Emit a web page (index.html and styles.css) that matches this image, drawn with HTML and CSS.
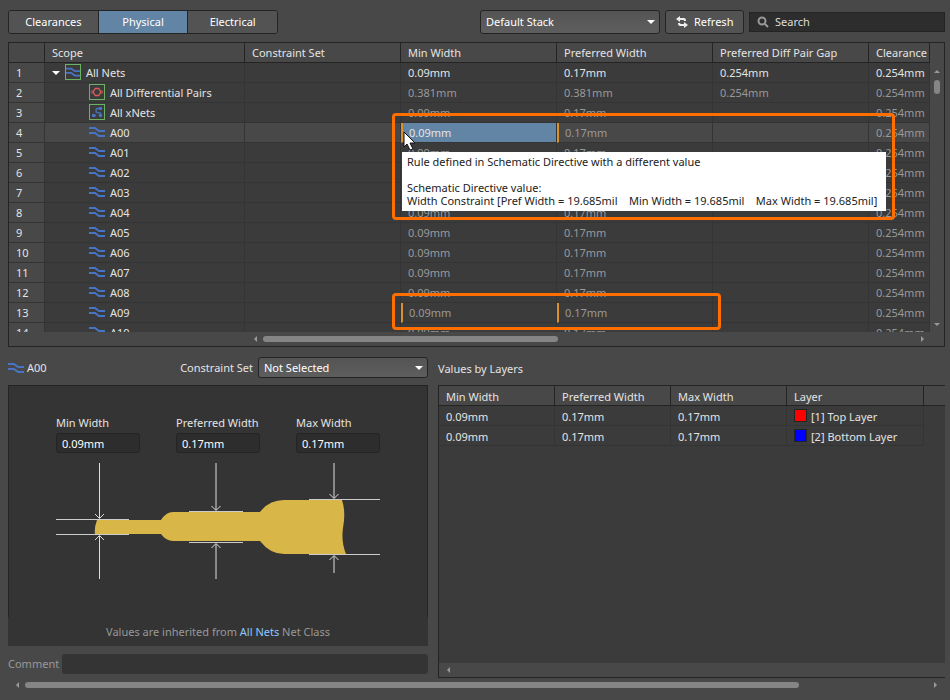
FILE: index.html
```html
<!DOCTYPE html>
<html lang="en">
<head>
    <meta charset="UTF-8">
    <meta name="viewport" content="width=device-width, initial-scale=1.0">
    <title>Constraint Manager</title>
    <link rel="stylesheet" href="styles.css">
</head>
<body>
    <svg class="defs" aria-hidden="true">
        <symbol id="net" viewBox="0 0 16 16">
            <path d="M0 4h6l4 3h6M0 9h6l4 3h6" fill="none" stroke="#4874c4" stroke-width="2"/>
        </symbol>
        <symbol id="pair" viewBox="0 0 16 16">
            <path d="M1 7h3M1 9h3M12 7h3M12 9h3" fill="none" stroke="#d85c5c"/>
            <path d="M4 7l2-3h4l2 3v2l-2 3H6L4 9z" fill="none" stroke="#d85c5c" stroke-width="1.500"/>
        </symbol>
        <symbol id="xnet" viewBox="0 0 16 16">
            <path d="M12 4H8L7 5v3l2 1h3v3M3 12h4" fill="none" stroke="#4874c4" stroke-width="1.500"/>
            <circle cx="12" cy="4" r="2" fill="#4874c4"/>
            <circle cx="12" cy="12" r="2" fill="#4874c4"/>
            <circle cx="4" cy="12" r="2" fill="#4874c4"/>
        </symbol>
    </svg>

    <div class="toolbar">
        <div class="tabs">
            <button class="tab">Clearances</button>
            <button class="tab active">Physical</button>
            <button class="tab">Electrical</button>
        </div>
        <div class="select stack">
            <select aria-label="Layer stack"><option>Default Stack</option></select>
        </div>
        <button class="refresh">
            <svg width="12" height="12" viewBox="0 0 12 12">
                <path d="M0 3l4-3v2h4q2 0 2 3H8q0-1-1-1H4v2z" fill="#eee"/>
                <path d="M12 9l-4 3v-2H4q-2 0-2-3h2q0 1 1 1h3V6z" fill="#eee"/>
            </svg>
            Refresh
        </button>
        <label class="search">
            <svg width="12" height="12" viewBox="0 0 12 12"><circle cx="5" cy="5" r="3.500" fill="none" stroke="#999" stroke-width="2"/><path d="M8 8l3 3" stroke="#999" stroke-width="2"/></svg>
            <input type="text" placeholder="Search" aria-label="Search">
        </label>
    </div>

    <div class="grid">
        <div class="grid-main">
            <div class="grid-view">
                <table class="nets">
                    <colgroup><col class="c-num"><col class="c-scope"><col class="c-val"><col class="c-val"><col class="c-val"><col class="c-val"><col></colgroup>
                    <thead>
                        <tr><th></th><th>Scope</th><th>Constraint Set</th><th>Min Width</th><th>Preferred Width</th><th>Preferred Diff Pair Gap</th><th>Clearance</th></tr>
                    </thead>
                    <tbody id="rows"></tbody>
                </table>
            </div>
            <div class="vscroll"><i class="arrow arrow-up"></i><i class="thumb"></i><i class="arrow arrow-down"></i></div>
            <div class="mark mark-tip"></div>
            <div class="mark mark-row"></div>
            <div class="tooltip" role="tooltip">Rule defined in Schematic Directive with a different value

Schematic Directive value:
Width Constraint [Pref Width = 19.685mil    Min Width = 19.685mil    Max Width = 19.685mil]</div>
            <svg class="cursor" width="14" height="20" viewBox="0 0 14 20"><path d="M1 1v15l3-3 3 6 3-1-3-6h5z" fill="#fff" stroke="#111"/></svg>
        </div>
        <div class="hscroll grid-hscroll"><i class="arrow arrow-left"></i><i class="thumb"></i><i class="arrow arrow-right"></i></div>
    </div>

    <div class="details">
        <div class="left">
            <div class="left-head">
                <svg class="icon"><use href="#net"/></svg>
                <span>A00</span>
                <label for="cset">Constraint Set</label>
                <div class="select cset">
                    <select id="cset"><option>Not Selected</option></select>
                </div>
            </div>
            <div class="panel">
                <div class="widths">
                    <div class="field"><label for="minw">Min Width</label><input type="text" id="minw" value="0.09mm"></div>
                    <div class="field"><label for="prefw">Preferred Width</label><input type="text" id="prefw" value="0.17mm"></div>
                    <div class="field"><label for="maxw">Max Width</label><input type="text" id="maxw" value="0.17mm"></div>
                </div>
                <svg class="track" width="324" height="120" viewBox="0 0 324 120">
                    <path d="M41 58H105Q110 50 117 50H204Q213 38 228 38H286Q290 50 287 66Q285 80 290 92H228Q214 92 204 79H117Q110 79 105 72H39Q38 66 41 58Z" fill="#d9b648"/>
                    <path d="M0 57.500h73M0 72.500h73M133 49.500h54M133 80.500h54M253 37.500h71M253 92.500h71" stroke="#ccc"/>
                    <path d="M43.500 1v55M43.500 74v43M160 1v47M160 82v35M278 1v35M278 94v17" stroke="#ddd"/>
                    <path d="M39 52l4.500 4.500 4.500-4.500M39 78l4.500-4.500 4.500 4.500M155.500 44l4.500 4.500 4.500-4.500M155.500 86l4.500-4.500 4.500 4.500M273.500 32l4.500 4.500 4.500-4.500M273.500 98l4.500-4.500 4.500 4.500" fill="none" stroke="#ddd"/>
                </svg>
            </div>
            <div class="inherit">Values are inherited from <a href="#">All Nets</a> Net Class</div>
            <div class="comment">
                <label for="comment">Comment</label>
                <input type="text" id="comment">
            </div>
        </div>
        <div class="right">
            <h2>Values by Layers</h2>
            <div class="layers-box">
                <div class="layers-view">
                    <table class="layers">
                        <colgroup><col class="l-val"><col class="l-val"><col class="l-val"><col class="l-name"><col></colgroup>
                        <thead>
                            <tr><th>Min Width</th><th>Preferred Width</th><th>Max Width</th><th>Layer</th><th></th></tr>
                        </thead>
                        <tbody>
                            <tr><td>0.09mm</td><td>0.17mm</td><td>0.17mm</td><td><div class="layer"><i class="swatch red"></i>[1] Top Layer</div></td><td></td></tr>
                            <tr><td>0.09mm</td><td>0.17mm</td><td>0.17mm</td><td><div class="layer"><i class="swatch blue"></i>[2] Bottom Layer</div></td><td></td></tr>
                        </tbody>
                    </table>
                </div>
                <div class="hscroll"><i class="arrow arrow-left"></i></div>
            </div>
        </div>
    </div>
    <div class="hscroll page-hscroll"><i class="arrow arrow-left"></i><i class="thumb"></i><i class="arrow arrow-right"></i></div>

    <script>
        // name, icon, min, preferred, diff pair gap, clearance
        let rows = [
            ["All Nets", "net", "0.09mm", "0.17mm", "0.254mm", "0.254mm"],
            ["All Differential Pairs", "pair", "0.381mm", "0.381mm", "0.254mm", "0.254mm"],
            ["All xNets", "xnet", "0.09mm", "0.17mm", "", "0.254mm"]
        ];
        for (let i = 0; i <= 10; i++) {
            rows.push(["A" + String(i).padStart(2, "0"), "net", "0.09mm", "0.17mm", "", "0.254mm"]);
        }

        let html = "";
        rows.forEach(function (r, i) {
            let cls = i === 0 ? "root" : i < 3 ? "group" : "net";
            if (r[0] === "A00") cls += " selected";
            if (r[0] === "A00" || r[0] === "A09") cls += " flagged";
            html += `<tr class="${cls}"><td>${i + 1}</td>
                <td><div class="scope">${i === 0 ? '<i class="expander"></i>' : ""}<svg class="icon"><use href="#${r[1]}"/></svg>${r[0]}</div></td>
                <td></td><td>${r[2]}</td><td>${r[3]}</td><td>${r[4]}</td><td>${r[5]}</td></tr>`;
        });
        document.getElementById("rows").innerHTML = html;
    </script>
</body>
</html>
```
FILE: styles.css
```css
* {
    box-sizing: border-box;
}
body {
    margin: 0;
    height: 100vh;
    padding: 10px 5px 8px 8px;
    display: flex;
    flex-direction: column;
    background: #484848;
    color: #e4e4e4;
    font-family: "Noto Sans", sans-serif;
    font-size: 11px;
    line-height: 16px;
    overflow: hidden;
}
button, input, select {
    font: inherit;
    color: #fff;
    margin: 0;
    outline: none;
}
.defs {
    display: none;
}
.icon {
    width: 16px;
    height: 16px;
    flex: none;
}

/* toolbar */
.toolbar {
    display: flex;
    align-items: center;
    gap: 5px;
    margin-bottom: 8px;
}
.tabs {
    display: flex;
    width: 270px;
    height: 24px;
    border: 1px solid #242424;
    border-radius: 3px;
    overflow: hidden;
    margin-right: auto;
}
.tab {
    flex: 1;
    padding: 0;
    border: 0;
    background: #535353;
}
.tab + .tab {
    border-left: 1px solid #242424;
}
.tab.active {
    background: #6385a5;
}
.select {
    position: relative;
}
.select select {
    appearance: none;
    display: block;
    width: 100%;
    height: 100%;
    padding: 0 20px 0 5px;
    border: 1px solid #242424;
    border-radius: 3px;
    background: linear-gradient(#545454, #5e5e5e);
}
.select::after {
    content: "";
    position: absolute;
    right: 5px;
    top: 50%;
    margin-top: -2px;
    border: 4px solid transparent;
    border-top-color: #fff;
    border-bottom: 0;
    pointer-events: none;
}
.stack {
    width: 180px;
    height: 24px;
}
.refresh {
    display: flex;
    align-items: center;
    gap: 6px;
    height: 24px;
    width: 79px;
    padding: 0 0 0 10px;
    border: 1px solid #242424;
    border-radius: 3px;
    background: #535353;
}
.search {
    display: flex;
    align-items: center;
    gap: 6px;
    width: 196px;
    height: 20px;
    padding-left: 7px;
    background: #2d2d2d;
    border: 1px solid #242424;
}
.search input {
    flex: 1;
    min-width: 0;
    padding: 0;
    border: 0;
    background: none;
}
.search input::placeholder {
    color: #ddd;
    opacity: 1;
}

/* tables */
table {
    width: 100%;
    table-layout: fixed;
    border-collapse: separate;
    border-spacing: 0;
}
th, td {
    height: 20px;
    padding: 2px 0 1px 7px;
    text-align: left;
    vertical-align: top;
    font-weight: normal;
    white-space: nowrap;
    line-height: 16px;
    border-right: 1px solid #343434;
    border-bottom: 1px solid #343434;
}
th {
    background: #484848;
    border-color: #242424;
}
td {
    background: #3b3b3b;
}

/* nets grid */
.grid {
    flex: 1;
    min-height: 0;
    display: flex;
    flex-direction: column;
    border: 1px solid #242424;
}
.grid-main {
    position: relative;
    flex: 1;
    min-height: 0;
    display: flex;
}
.grid-view {
    flex: 1;
    overflow: hidden;
}
.c-num { width: 36px; }
.c-scope { width: 200px; }
.c-val { width: 156px; }
.nets td:first-child {
    background: #484848;
}
.nets td {
    color: #999;
}
.nets td:nth-child(-n+2), .nets .root td {
    color: #e4e4e4;
}
.nets .selected td {
    background: #484848;
}
.nets .selected td:nth-child(4) {
    background: #6385a5;
    color: #e4e4e4;
}
.nets .flagged td:nth-child(4), .nets .flagged td:nth-child(5) {
    border-left: 2px solid #d9912f;
    padding-left: 6px;
}
.scope {
    display: flex;
    gap: 5px;
    height: 16px;
    padding-left: 37px;
}
.root .scope {
    padding-left: 0;
}
.scope .icon {
    margin-top: -1px;
}
.root .icon, .group .icon {
    border: 1px solid #6cb265;
}
.expander {
    align-self: center;
    border: 4px solid transparent;
    border-top-color: #fff;
    border-bottom: 0;
}

/* scrollbars */
.thumb {
    background: #858585;
    border-radius: 3px;
}
.arrow {
    flex: none;
    border: 3px solid transparent;
}
.arrow-up { border-bottom-color: #999; border-top: 0; }
.arrow-down { border-top-color: #999; border-bottom: 0; margin-top: auto; }
.arrow-left { border-right-color: #999; border-left: 0; }
.arrow-right { border-left-color: #999; border-right: 0; margin-left: auto; }
.vscroll {
    width: 14px;
    display: flex;
    flex-direction: column;
    align-items: center;
    padding: 27px 0 6px;
}
.vscroll .thumb {
    width: 6px;
    height: 14px;
    margin-top: 7px;
}
.hscroll {
    flex: none;
    display: flex;
    align-items: center;
    height: 14px;
    gap: 6px;
    padding: 0 8px;
}
.hscroll .thumb {
    height: 6px;
}
.grid-hscroll {
    padding: 0 20px 0 245px;
}
.grid-hscroll .thumb {
    width: 44%;
}
.page-hscroll .thumb {
    width: 84%;
}

/* callouts over the grid */
.mark {
    position: absolute;
    border: 3px solid #ff6f00;
    border-radius: 4px;
}
.mark-tip {
    left: 383px;
    top: 70px;
    width: 503px;
    height: 107px;
}
.mark-row {
    left: 383px;
    top: 250px;
    width: 329px;
    height: 37px;
}
.tooltip {
    position: absolute;
    left: 393px;
    top: 109px;
    padding: 3px 9px 4px 5px;
    background: #fff;
    color: #222;
    line-height: 13px;
    white-space: pre;
}
.cursor {
    position: absolute;
    left: 394px;
    top: 88px;
}

/* details */
.details {
    flex: none;
    display: flex;
    gap: 10px;
    padding-top: 10px;
}
.left {
    flex: 0 0 420px;
    padding-bottom: 4px;
}
.left-head {
    display: flex;
    align-items: center;
    height: 21px;
    gap: 3px;
}
.left-head label {
    margin-left: auto;
}
.cset {
    width: 170px;
    height: 21px;
    margin-left: 2px;
}
.panel {
    margin-top: 7px;
    height: 232px;
    padding: 29px 47px 0;
    background: #343434;
    border: 1px solid #242424;
    border-bottom: 0;
}
.widths {
    display: flex;
    gap: 36px;
}
.field {
    width: 84px;
}
.field label {
    display: block;
    white-space: nowrap;
}
.field input {
    display: block;
    width: 100%;
    height: 20px;
    margin-top: 2px;
    padding: 0 5px;
    background: #2d2d2d;
    border: 1px solid #242424;
    border-radius: 3px;
}
.track {
    display: block;
    margin-top: 9px;
}
.inherit {
    padding: 7px 0 6px;
    background: #343434;
    color: #999;
    text-align: center;
}
.inherit a {
    color: #8cc8ff;
    text-decoration: none;
}
.comment {
    display: flex;
    align-items: center;
    gap: 3px;
    margin-top: 8px;
    color: #999;
}
.comment input {
    flex: 1;
    min-width: 0;
    height: 20px;
    border: 0;
    border-radius: 3px;
    background: #343434;
}
.right {
    flex: 1;
    min-width: 0;
    display: flex;
    flex-direction: column;
}
h2 {
    margin: 4px 0 8px;
    font-size: 11px;
    line-height: 16px;
    font-weight: normal;
}
.layers-box {
    flex: 1;
    display: flex;
    flex-direction: column;
    border: 1px solid #242424;
    border-right: 0;
}
.layers-view {
    flex: 1;
    background: #3b3b3b;
}
.l-val { width: 116px; }
.l-name { width: 137px; }
.layers th, .layers td {
    padding: 3px 0 0 7px;
}
.layers th:last-child, .layers td:last-child {
    border-right: 0;
}
.layers td:last-child {
    border-bottom: 0;
}
.layer {
    display: flex;
    gap: 4px;
    height: 16px;
}
.swatch {
    width: 13px;
    height: 13px;
    border: 1px solid #242424;
}
.red { background: #f00; }
.blue { background: #00f; }
```
